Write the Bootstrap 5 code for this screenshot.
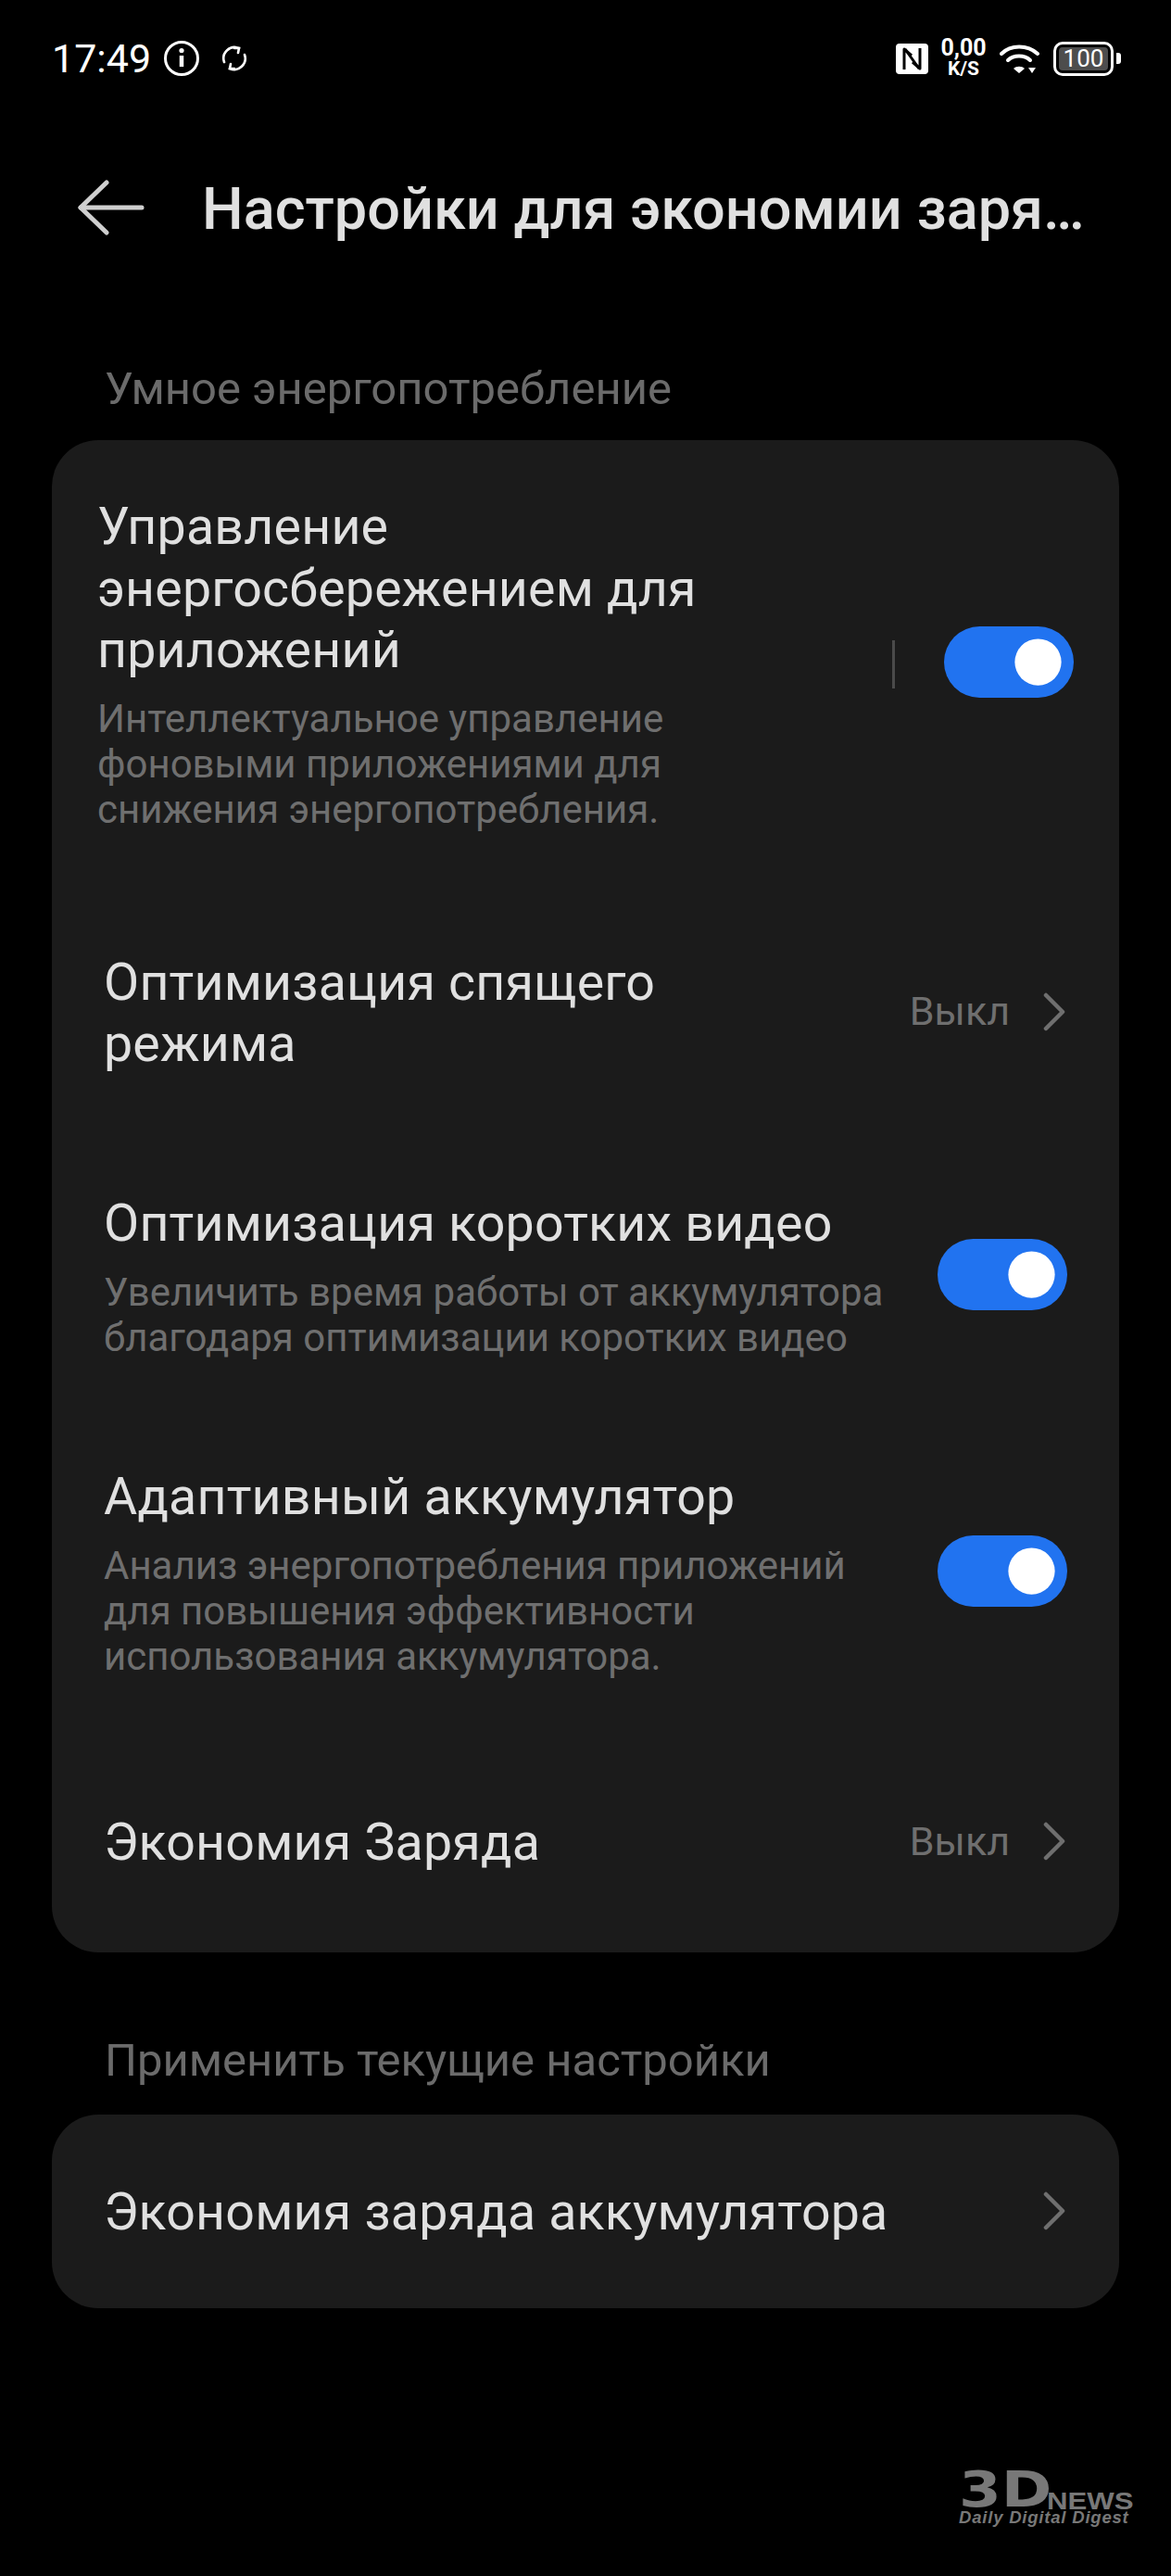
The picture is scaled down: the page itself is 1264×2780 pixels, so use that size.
<!DOCTYPE html>
<html lang="ru">
<head>
    <meta charset="UTF-8">
    <meta name="viewport" content="width=device-width, initial-scale=1.0">
    <title>Настройки для экономии заряда</title>
    <link href="https://cdn.jsdelivr.net/npm/bootstrap@5.3.0/dist/css/bootstrap.min.css" rel="stylesheet">
    <style>
        body { background: #000; font-family: Roboto, "Noto Sans", sans-serif; color: #e0e0e0; width: 1264px; height: 2780px; position: relative; overflow: hidden; }

        /* Status bar */
        .status-bar { height: 126px; padding: 0 54px 0 56px; color: #fff; }
        .status-time { font-size: 43px; line-height: 1; width: 104px; }
        .speed-box { font-size: 21px; font-weight: 700; line-height: 22px; text-align: center; width: 50px; margin-left: 13px; }
        .speed-num { font-size: 25px; display: block; }
        .batt-box { width: 65px; height: 37px; border: 3px solid #fff; border-radius: 10px; padding: 3px; margin-left: 14px; }
        .batt-level { background: #4d4d4d; border-radius: 4px; font-size: 26px; line-height: 25px; height: 25px; text-align: center; }
        .batt-tip { width: 5px; height: 12px; background: #fff; border-radius: 0 3px 3px 0; margin-left: 3px; }
        .icon-info { margin-left: 17px; }
        .icon-sync { margin-left: 24px; }
        .icon-wifi { margin-left: 14px; }

        /* Header */
        .top-bar { height: 194px; padding: 0 0 0 84px; align-items: flex-start; }
        .back-arrow { width: 72px; height: 60px; margin-top: 68px; }
        .top-title { font-size: 63px; font-weight: 500; line-height: 70px; margin: 0 0 0 62px; color: #e0e0e0; padding-top: 65px; white-space: nowrap; }

        /* Sections */
        .group-label { font-size: 49px; line-height: 60px; color: #6b6b6b; padding-left: 113px; }
        .group-card { background: #1b1b1b; border: 0; border-radius: 50px; margin: 0 56px; color: #e0e0e0; }
        .group-label-first { padding-top: 70px; height: 155px; }
        .group-label-next { height: 175px; padding-top: 87px; }
        .row-item { display: flex; align-items: center; padding: 0 58px 0 56px; }
        .row-item-top { padding: 61px 49px 0 49px; }
        .row-item-single { height: 209px; padding-top: 4px; }
        .row-text { flex: 1 1 auto; min-width: 0; }
        .row-title { font-size: 55.5px; line-height: 66.5px; margin: 0; letter-spacing: .2px; }
        .row-sub { font-size: 42px; line-height: 49px; color: #6f6f6f; margin: 15px 0 0; }
        .row-value { font-size: 43px; color: #6f6f6f; margin: 0 36px 5px 0; }
        .row-chevron { width: 24px; height: 42px; flex: none; margin-bottom: 5px; }
        .row-divider { width: 3px; height: 52px; background: #4a4a4a; margin-right: 53px; flex: none; }
        .gap-a { margin-top: 130px; }
        .gap-b { margin-top: 127.5px; padding-right: 56px; }
        .gap-c { margin-top: 115.7px; padding-right: 56px; }
        .gap-d { margin-top: 143px; margin-bottom: 83px; }

        /* Switch */
        .form-switch.power-switch { padding: 0; margin: 0 0 4px; min-height: 0; flex: none; display: flex; }
        .form-switch.power-switch .form-check-input { width: 140px; height: 77px; margin: 0; float: none; border: 0; border-radius: 39px; background-color: #2173f0; background-size: 67px; background-position: right 5px center; }

        /* Watermark */
        .wm-box { position: absolute; left: 1035px; top: 2662px; width: 195px; color: #787878; }
        .wm-top { height: 47px; }
        .wm-mark { font-family: "DejaVu Sans", sans-serif; font-weight: 700; font-size: 54px; line-height: 44px; width: 95px; display: block; transform: scaleX(1.22); transform-origin: left; }
        .wm-news { font-family: "Liberation Sans", sans-serif; font-size: 26px; font-weight: 700; line-height: 20px; transform: scaleX(1.2); transform-origin: left; }
        .wm-slogan { font-family: "Liberation Sans", sans-serif; font-size: 18.5px; font-weight: 700; font-style: italic; line-height: 16px; white-space: nowrap; letter-spacing: .8px; }
    </style>
</head>
<body>
    <!-- Status bar -->
    <div class="status-bar d-flex align-items-center">
        <span class="status-time">17:49</span>
        <svg class="icon-info" width="38" height="38" viewBox="0 0 38 38" fill="none" stroke="#fff"><circle cx="19" cy="19" r="17.5" stroke-width="3"/><path d="M19 16v12" stroke-width="4.5"/><circle cx="19" cy="10.5" r="2.6" fill="#fff" stroke="none"/></svg>
        <svg class="icon-sync" width="28" height="28" viewBox="0 0 28 28" fill="none" stroke="#fff" stroke-width="2.6" stroke-linecap="round"><path d="M3 18A12 12 0 0 1 19 3"/><path d="M25 10A12 12 0 0 1 9 25"/><path d="M14 3l5 0 -1 5"/><path d="M14 25l-5 0 1 -5"/></svg>
        <div class="d-flex align-items-center ms-auto">
            <svg width="35" height="33" viewBox="0 0 35 33"><path fill="#fff" d="M4 0h27a4 4 0 0 1 4 4v25a4 4 0 0 1-4 4H4a4 4 0 0 1-4-4V4a4 4 0 0 1 4-4z"/><path fill="none" stroke="#000" stroke-width="3" stroke-linejoin="round" d="M9 28V6l8 7M26 5v22l-8-7"/><path fill="none" stroke="#000" stroke-width="3" d="M10 6l15 21"/></svg>
            <div class="speed-box"><span class="speed-num">0,00</span>K/S</div>
            <svg class="icon-wifi" width="44" height="34" viewBox="0 0 44 34" fill="none" stroke="#fff" stroke-width="4" stroke-linecap="round"><path d="M2 12C12 2 30 2 41 12"/><path d="M9 19C15 13 27 13 33 19"/><path d="M21 33l-6-5c3-3 9-3 12 0z" fill="#fff" stroke="none"/><path d="M35 33l-4-6h8z" fill="#fff" stroke="none"/></svg>
            <div class="batt-box"><div class="batt-level">100</div></div>
            <div class="batt-tip"></div>
        </div>
    </div>

    <!-- Header -->
    <div class="top-bar d-flex">
        <svg class="back-arrow" viewBox="0 0 72 60" fill="none" stroke="#cfcfcf" stroke-width="5" stroke-linecap="round" stroke-linejoin="round"><path d="M31 3L3 30l28 27"/><path d="M3 30h66"/></svg>
        <h1 class="top-title">Настройки для экономии заря…</h1>
    </div>

    <div class="group-label group-label-first">Умное энергопотребление</div>
    <div class="card group-card">
        <div class="row-item row-item-top">
            <div class="row-text">
                <p class="row-title">Управление<br>энергосбережением для<br>приложений</p>
                <p class="row-sub">Интеллектуальное управление<br>фоновыми приложениями для<br>снижения энергопотребления.</p>
            </div>
            <span class="row-divider"></span>
            <div class="form-check form-switch power-switch"><input class="form-check-input" type="checkbox" role="switch" checked></div>
        </div>
        <div class="row-item gap-a">
            <div class="row-text"><p class="row-title">Оптимизация спящего<br>режима</p></div>
            <span class="row-value">Выкл</span>
            <svg class="row-chevron" viewBox="0 0 24 42" fill="none" stroke="#6f6f6f" stroke-width="4.5" stroke-linecap="round" stroke-linejoin="round"><path d="M3 3l18 18L3 39"/></svg>
        </div>
        <div class="row-item gap-b">
            <div class="row-text">
                <p class="row-title">Оптимизация коротких видео</p>
                <p class="row-sub">Увеличить время работы от аккумулятора<br>благодаря оптимизации коротких видео</p>
            </div>
            <div class="form-check form-switch power-switch"><input class="form-check-input" type="checkbox" role="switch" checked></div>
        </div>
        <div class="row-item gap-c">
            <div class="row-text">
                <p class="row-title">Адаптивный аккумулятор</p>
                <p class="row-sub">Анализ энергопотребления приложений<br>для повышения эффективности<br>использования аккумулятора.</p>
            </div>
            <div class="form-check form-switch power-switch"><input class="form-check-input" type="checkbox" role="switch" checked></div>
        </div>
        <div class="row-item gap-d">
            <div class="row-text"><p class="row-title">Экономия Заряда</p></div>
            <span class="row-value">Выкл</span>
            <svg class="row-chevron" viewBox="0 0 24 42" fill="none" stroke="#6f6f6f" stroke-width="4.5" stroke-linecap="round" stroke-linejoin="round"><path d="M3 3l18 18L3 39"/></svg>
        </div>
    </div>

    <div class="group-label group-label-next">Применить текущие настройки</div>
    <div class="card group-card">
        <div class="row-item row-item-single">
            <div class="row-text"><p class="row-title">Экономия заряда аккумулятора</p></div>
            <svg class="row-chevron" viewBox="0 0 24 42" fill="none" stroke="#6f6f6f" stroke-width="4.5" stroke-linecap="round" stroke-linejoin="round"><path d="M3 3l18 18L3 39"/></svg>
        </div>
    </div>

    <!-- Watermark -->
    <div class="wm-box">
        <div class="wm-top d-flex align-items-end">
            <span class="wm-mark">3D</span><span class="wm-news">NEWS</span>
        </div>
        <div class="wm-slogan">Daily Digital Digest</div>
    </div>

    <script src="https://cdn.jsdelivr.net/npm/bootstrap@5.3.0/dist/js/bootstrap.bundle.min.js"></script>
</body>
</html>
